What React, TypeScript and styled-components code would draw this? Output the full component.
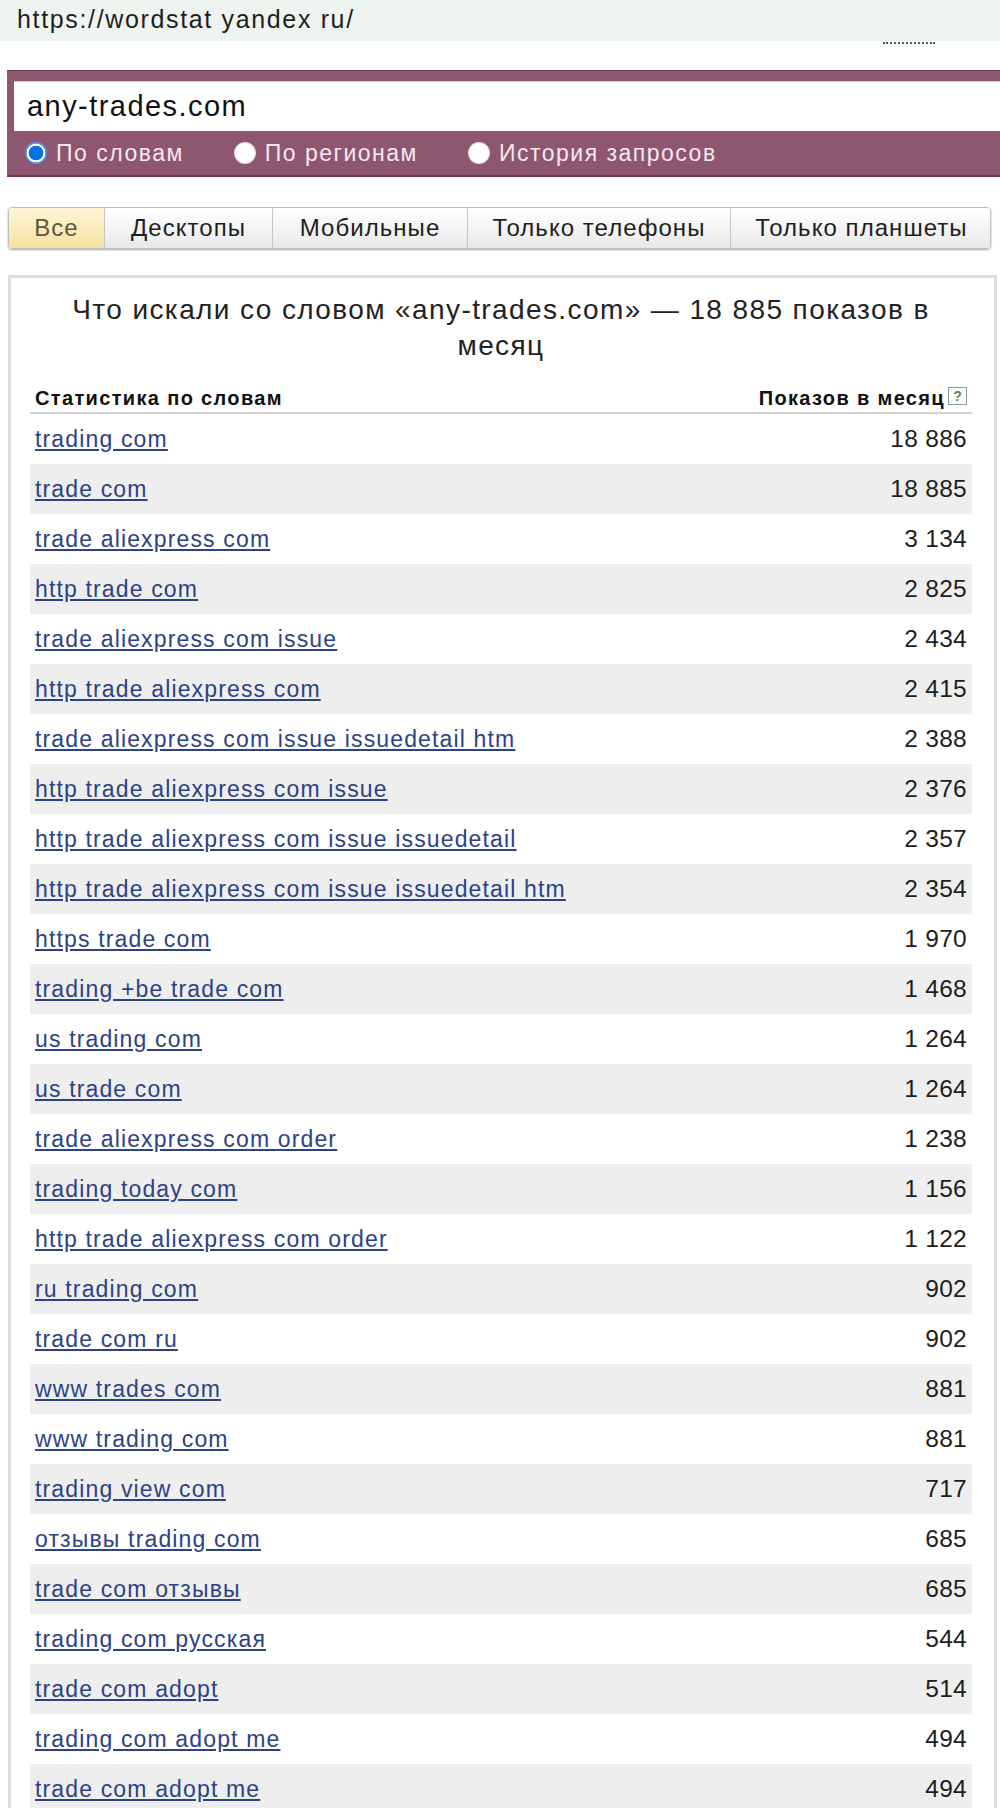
import React from "react";
import styled, { createGlobalStyle } from "styled-components";

const Global = createGlobalStyle`
  html, body { margin: 0; padding: 0; background: #fff; }
  body { font-family: "Liberation Sans", Arial, sans-serif; color: #222; }
  * { box-sizing: border-box; }
`;

const Page = styled.div`
  width: 1000px;
  display: flex;
  flex-direction: column;
`;

const UrlBar = styled.div`
  height: 41px;
  background: #eef4ef;
  padding-left: 17px;
  font-size: 25px;
  line-height: 38px;
  letter-spacing: 1.65px;
  color: #1f1f1f;
`;

const DotsRow = styled.div`
  height: 29px;
  display: flex;
  justify-content: flex-end;
  padding-right: 65px;
`;

const Dots = styled.span`
  width: 52px;
  height: 0;
  margin-top: 1px;
  border-top: 2px dotted #555;
`;

const SearchBar = styled.div`
  margin-left: 7px;
  height: 107px;
  background: #8e566f;
  border-top: 1px solid #6d3a52;
  border-bottom: 2px solid #6d3a52;
  padding: 10px 0 0 7px;
  display: flex;
  flex-direction: column;
`;

const Query = styled.input`
  height: 50px;
  border: none;
  border-top: 1px solid #d9c9d0;
  outline: none;
  background: #fff;
  padding: 0 0 0 13px;
  font-family: "Liberation Sans", Arial, sans-serif;
  font-size: 29px;
  letter-spacing: 1.45px;
  color: #111;
  width: 100%;
`;

const RadioRow = styled.div`
  display: flex;
  align-items: center;
  height: 44px;
  padding-left: 11px;
  gap: 50px;
`;

const RadioItem = styled.label`
  display: flex;
  align-items: center;
  gap: 9px;
  font-size: 23px;
  letter-spacing: 1.5px;
  line-height: 44px;
  color: #f6e9ef;
`;

const RadioDot = styled.span<{ $checked?: boolean }>`
  width: 22px;
  height: 22px;
  border-radius: 50%;
  flex: none;
  background: ${(p) =>
    p.$checked
      ? "radial-gradient(circle, #0b6fe6 0 7px, #ffffff 7.6px 9px, #5b95e6 9.6px)"
      : "radial-gradient(circle, #ffffff 0 9.5px, #e6dde2 10.2px)"};
`;

const Tabs = styled.div`
  margin: 30px 0 0 8px;
  width: 983px;
  height: 42px;
  display: flex;
  border: 1px solid #bdbdbd;
  border-radius: 4px;
  box-shadow: 0 1px 2px rgba(0, 0, 0, 0.35);
  overflow: hidden;
`;

const Tab = styled.div<{ $active?: boolean; $w: number }>`
  width: ${(p) => p.$w}px;
  flex: none;
  display: flex;
  align-items: center;
  justify-content: center;
  font-size: 24px;
  letter-spacing: 1.05px;
  color: ${(p) => (p.$active ? "#5a5540" : "#1e1e1e")};
  background: ${(p) =>
    p.$active
      ? "linear-gradient(#fff6d6, #f6e1a0)"
      : "linear-gradient(#ffffff, #e9e9e9)"};
  border-left: ${(p) => (p.$active ? "none" : "1px solid #c6c6c6")};
`;

const Panel = styled.div`
  margin: 26px 0 0 8px;
  width: 989px;
  border: 3px solid #dedede;
  padding: 0 22px 0 19px;
`;

const Title = styled.div`
  padding-top: 14px;
  font-size: 28px;
  line-height: 36px;
  letter-spacing: 1.4px;
  text-align: center;
  color: #222;
`;

const HeaderRow = styled.div`
  display: flex;
  justify-content: space-between;
  align-items: flex-end;
  padding: 23px 5px 4px 5px;
  border-bottom: 2px solid #d2d2d2;
  font-size: 20px;
  line-height: 20px;
  font-weight: bold;
  letter-spacing: 1.35px;
  color: #111;
`;

const HeadRight = styled.span`
  display: flex;
  align-items: flex-end;
  gap: 3px;
`;

const Help = styled.span`
  width: 19px;
  height: 18px;
  border: 1px solid #86a08a;
  color: #4f8a57;
  font-size: 14px;
  line-height: 16px;
  font-weight: bold;
  letter-spacing: 0;
  text-align: center;
  margin-bottom: 3px;
`;

const Row = styled.div<{ $alt: boolean }>`
  height: 50px;
  display: flex;
  align-items: center;
  justify-content: space-between;
  padding: 0 5px;
  background: ${(p) => (p.$alt ? "#eeeeee" : "transparent")};
`;

const Phrase = styled.a`
  font-size: 23px;
  letter-spacing: 1.15px;
  color: #2b4286;
  text-decoration: underline;
  text-underline-offset: 2px;
  cursor: pointer;
`;

const Count = styled.span`
  font-size: 24.5px;
  letter-spacing: 0.3px;
  color: #1e1e1e;
`;

const tabs: [string, number][] = [
  ["Все", 95],
  ["Десктопы", 168],
  ["Мобильные", 195],
  ["Только телефоны", 263],
  ["Только планшеты", 262],
];

const rows: [string, string][] = [
  ["trading com", "18 886"],
  ["trade com", "18 885"],
  ["trade aliexpress com", "3 134"],
  ["http trade com", "2 825"],
  ["trade aliexpress com issue", "2 434"],
  ["http trade aliexpress com", "2 415"],
  ["trade aliexpress com issue issuedetail htm", "2 388"],
  ["http trade aliexpress com issue", "2 376"],
  ["http trade aliexpress com issue issuedetail", "2 357"],
  ["http trade aliexpress com issue issuedetail htm", "2 354"],
  ["https trade com", "1 970"],
  ["trading +be trade com", "1 468"],
  ["us trading com", "1 264"],
  ["us trade com", "1 264"],
  ["trade aliexpress com order", "1 238"],
  ["trading today com", "1 156"],
  ["http trade aliexpress com order", "1 122"],
  ["ru trading com", "902"],
  ["trade com ru", "902"],
  ["www trades com", "881"],
  ["www trading com", "881"],
  ["trading view com", "717"],
  ["отзывы trading com", "685"],
  ["trade com отзывы", "685"],
  ["trading com русская", "544"],
  ["trade com adopt", "514"],
  ["trading com adopt me", "494"],
  ["trade com adopt me", "494"],
];

export default function App() {
  return (
    <Page>
      <Global />
      <UrlBar>https://wordstat yandex ru/</UrlBar>
      <DotsRow>
        <Dots />
      </DotsRow>
      <SearchBar>
        <Query readOnly value="any-trades.com" />
        <RadioRow>
          <RadioItem>
            <RadioDot $checked />
            По словам
          </RadioItem>
          <RadioItem>
            <RadioDot />
            По регионам
          </RadioItem>
          <RadioItem>
            <RadioDot />
            История запросов
          </RadioItem>
        </RadioRow>
      </SearchBar>
      <Tabs>
        {tabs.map(([t, w], i) => (
          <Tab key={t} $w={w} $active={i === 0}>
            {t}
          </Tab>
        ))}
      </Tabs>
      <Panel>
        <Title>
          Что искали со словом «any-trades.com» — 18 885 показов в
          <br />
          месяц
        </Title>
        <HeaderRow>
          <span>Статистика по словам</span>
          <HeadRight>
            Показов в месяц
            <Help>?</Help>
          </HeadRight>
        </HeaderRow>
        {rows.map(([p, c], i) => (
          <Row key={p} $alt={i % 2 === 1}>
            <Phrase>{p}</Phrase>
            <Count>{c}</Count>
          </Row>
        ))}
      </Panel>
    </Page>
  );
}
